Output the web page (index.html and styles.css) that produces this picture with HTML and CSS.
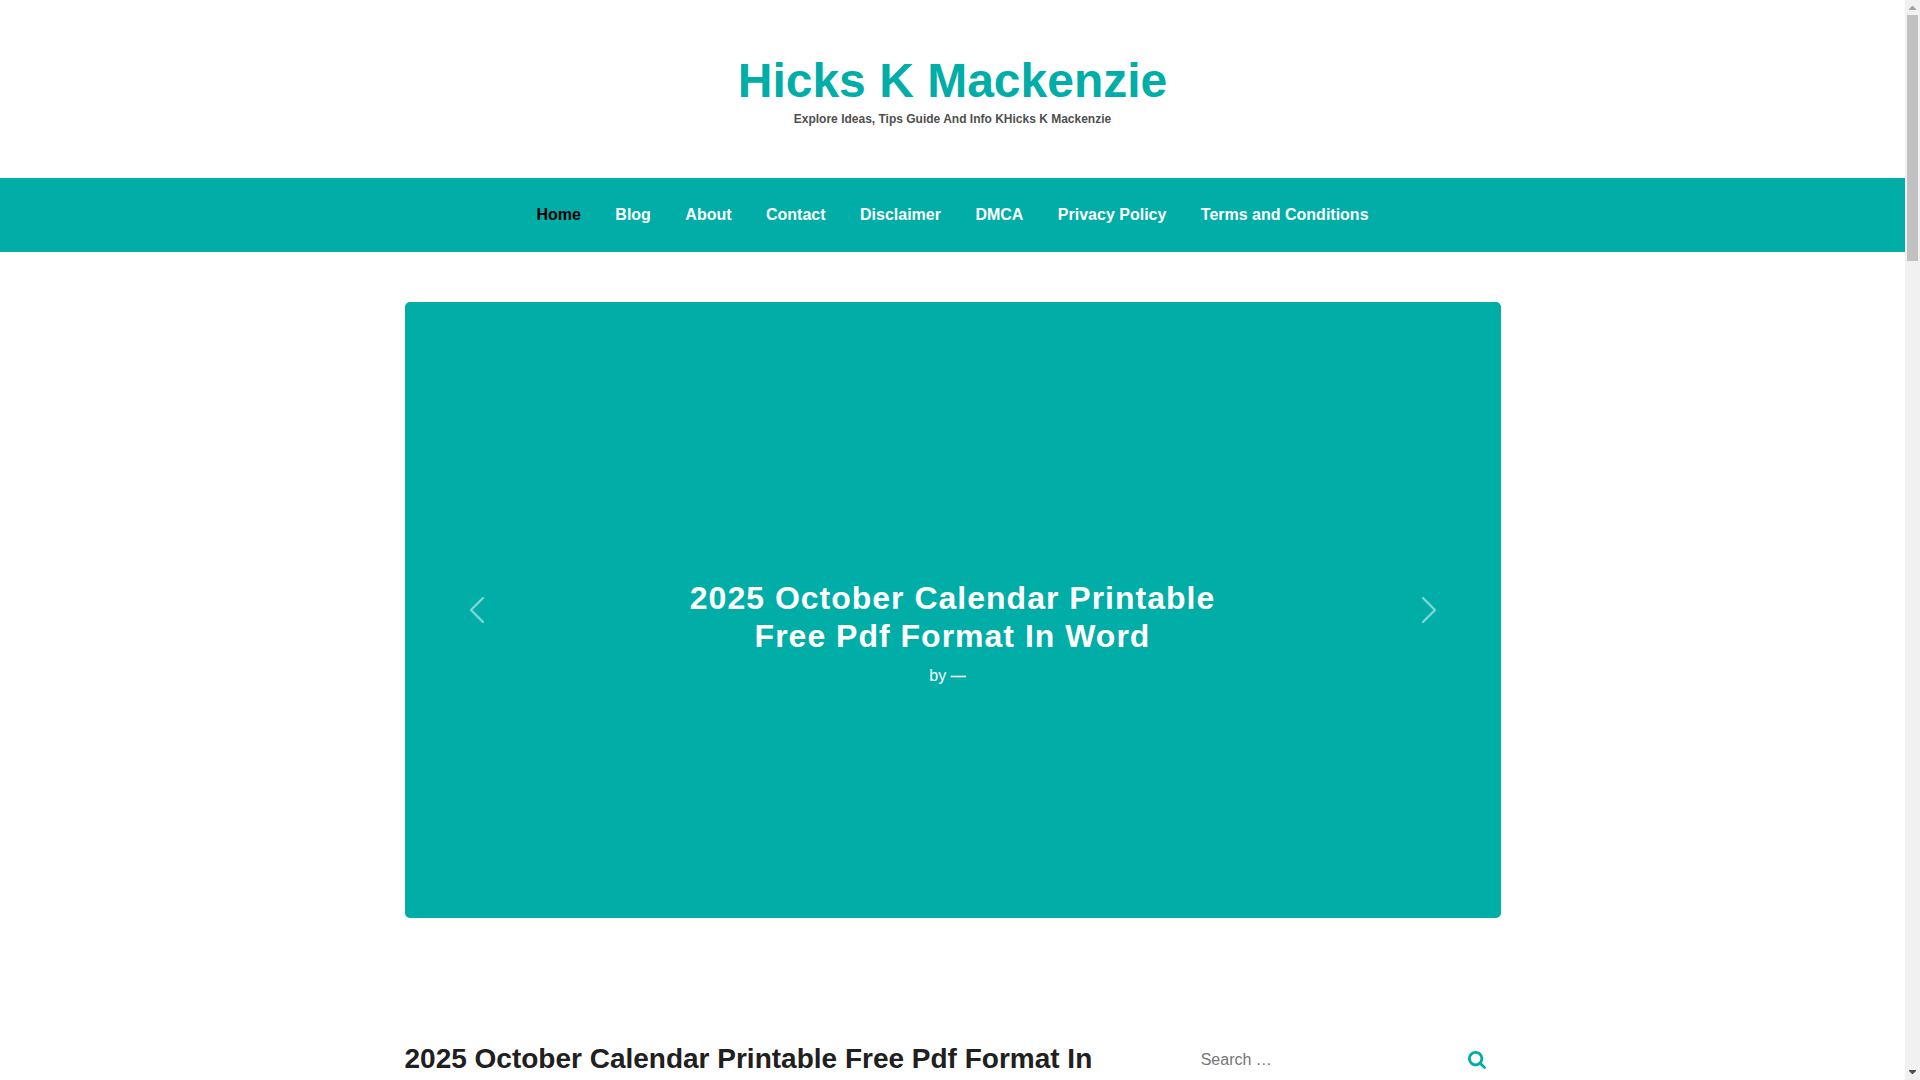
FILE: index.html
```html
<!DOCTYPE html>
<html lang="en">
<head>
  <meta charset="UTF-8">
  <meta name="viewport" content="width=device-width, initial-scale=1.0">
  <title>Hicks K Mackenzie</title>
  <link rel="stylesheet" href="styles.css">
</head>
<body>
  <div class="page">
    <header class="site-header">
      <h1 class="site-title"><a href="#">Hicks K Mackenzie</a></h1>
      <p class="site-description">Explore Ideas, Tips Guide And Info KHicks K Mackenzie</p>
    </header>

    <nav class="main-nav">
      <ul>
        <li class="current"><a href="#">Home</a></li>
        <li><a href="#">Blog</a></li>
        <li><a href="#">About</a></li>
        <li><a href="#">Contact</a></li>
        <li><a href="#">Disclaimer</a></li>
        <li><a href="#">DMCA</a></li>
        <li><a href="#">Privacy Policy</a></li>
        <li><a href="#">Terms and Conditions</a></li>
      </ul>
    </nav>

    <section class="slider container">
      <button class="slider-btn" type="button" aria-label="Previous">
        <svg viewBox="0 0 16 16" fill="#fff" stroke="#fff" stroke-width=".2"><path d="M11.354 1.646a.5.5 0 0 1 0 .708L5.707 8l5.647 5.646a.5.5 0 0 1-.708.708l-6-6a.5.5 0 0 1 0-.708l6-6a.5.5 0 0 1 .708 0z"/></svg>
      </button>
      <div class="slider-caption">
        <h2><a href="#">2025 October Calendar Printable Free Pdf Format In Word</a></h2>
        <p>by <a href="#">—</a></p>
      </div>
      <button class="slider-btn" type="button" aria-label="Next">
        <svg viewBox="0 0 16 16" fill="#fff" stroke="#fff" stroke-width=".2"><path d="M4.646 1.646a.5.5 0 0 1 .708 0l6 6a.5.5 0 0 1 0 .708l-6 6a.5.5 0 0 1-.708-.708L10.293 8 4.646 2.354a.5.5 0 0 1 0-.708z"/></svg>
      </button>
    </section>

    <div class="content container">
      <main class="posts">
        <h2 class="post-title"><a href="#">2025 October Calendar Printable Free Pdf Format In Word</a></h2>
      </main>
      <aside class="sidebar">
        <form class="search-form">
          <input type="search" placeholder="Search …" aria-label="Search">
          <button type="submit" aria-label="Search">
            <svg viewBox="0 0 1664 1664" fill="currentColor"><path d="M1152 704q0-185-131.500-316.500T704 256 387.500 387.500 256 704t131.500 316.500T704 1152t316.500-131.500T1152 704zm512 832q0 52-38 90t-90 38q-54 0-90-38l-343-342q-179 124-399 124-143 0-273.500-55.500t-225-150-150-225T0 704t55.500-273.500 150-225 225-150T704 0t273.500 55.500 225 150 150 225T1408 704q0 220-124 399l343 343q37 37 37 90z"/></svg>
          </button>
        </form>
      </aside>
    </div>
  </div>

  <div class="scrollbar" aria-hidden="true">
    <svg viewBox="0 0 15 15" fill="#a3a3a3"><path d="M4 10V9l3-3h1l3 3v1z"/></svg>
    <div class="scrollbar-track"><div class="scrollbar-thumb"></div></div>
    <svg viewBox="0 0 15 15" fill="#505050"><path d="M4 5v1l3 3h1l3-3V5z"/></svg>
  </div>
</body>
</html>
```

FILE: styles.css
```css
* {
  box-sizing: border-box;
}

body {
  display: flex;
  height: 100vh;
  margin: 0;
  overflow: hidden;
  background: #fff;
  color: #202020;
  font-family: "Liberation Sans", Arial, sans-serif;
  font-size: 16px;
}

h1, h2, p, ul {
  margin: 0;
}

a {
  color: inherit;
  text-decoration: none;
}

button {
  border: none;
  padding: 0;
  background: none;
  cursor: pointer;
}

.page {
  flex: 1;
  min-width: 0;
  overflow: hidden;
}

.container {
  width: 100%;
  max-width: 1096px;
  margin: 0 auto;
}

/* header */
.site-header {
  padding: 52px 16px 50px;
  text-align: center;
}

.site-title {
  color: #00ada7;
  font-size: 48px;
  line-height: 58px;
}

.site-description {
  color: #4f4f4f;
  font-size: 12px;
  font-weight: bold;
  line-height: 18px;
}

/* navigation */
.main-nav {
  padding: 24px 16px;
  background: #00ada7;
}

.main-nav ul {
  padding: 0;
  list-style: none;
  text-align: center;
  line-height: 26px;
}

.main-nav li {
  display: inline-block;
  padding: 0 15px;
  color: #fff;
  font-weight: bold;
}

.main-nav .current {
  color: #000;
}

/* slider */
.slider {
  display: flex;
  align-items: center;
  justify-content: space-between;
  margin-top: 50px;
  padding: 0 56px;
  aspect-ratio: 1096 / 616;
  border-radius: 5px;
  background: #00ada7;
  color: #fff;
}

.slider-btn {
  opacity: 0.5;
}

.slider-btn svg {
  display: block;
  width: 32px;
  height: 32px;
}

.slider-caption {
  max-width: 548px;
  padding-top: 47px;
  text-align: center;
}

.slider-caption h2 {
  font-size: 32px;
  letter-spacing: 1px;
  line-height: 38px;
}

.slider-caption p {
  padding: 9px 10px 0 0;
  line-height: 24px;
}

.slider-caption p a {
  font-size: 15px;
  font-weight: bold;
}

/* posts and sidebar */
.content {
  display: flex;
  justify-content: space-between;
  margin-top: 124px;
}

.posts {
  width: 66%;
}

.post-title {
  font-size: 28px;
  line-height: 34px;
}

.sidebar {
  width: 29%;
}

.search-form {
  display: flex;
  align-items: center;
  padding: 0 15px 0 18px;
}

.search-form input {
  flex: 1;
  min-width: 0;
  height: 36px;
  border: none;
  padding: 0;
  outline: none;
  background: none;
  font: inherit;
}

.search-form input::placeholder {
  color: #757575;
}

.search-form button {
  color: #00ada7;
}

.search-form svg {
  display: block;
  width: 18px;
  height: 18px;
}

/* scrollbar */
.scrollbar {
  display: flex;
  flex-direction: column;
  width: 15px;
  background: #f1f1f1;
}

.scrollbar svg {
  display: block;
  width: 15px;
  height: 15px;
}

.scrollbar-track {
  flex: 1;
  padding: 0 2px;
}

.scrollbar-thumb {
  height: 23.4%;
  background: #c1c1c1;
}
```
